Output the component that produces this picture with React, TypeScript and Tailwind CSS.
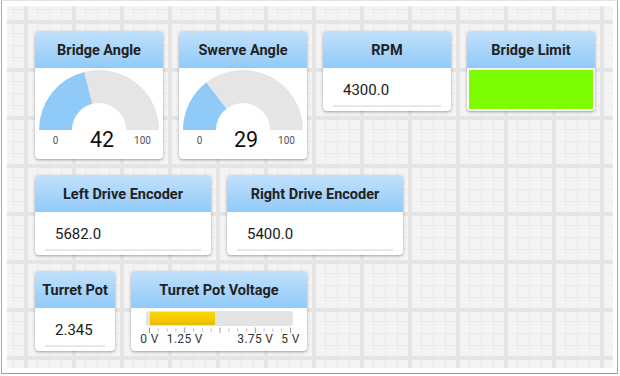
import React from "react";

const FONT = "font-['Roboto','Liberation_Sans',sans-serif]";

function Card({
  title,
  w,
  h,
  children,
}: {
  title: string;
  w: string;
  h: string;
  children: React.ReactNode;
}) {
  return (
    <div
      className={`${w} ${h} shrink-0 rounded-[4px] bg-white shadow-[0_1px_3px_rgba(0,0,0,0.35)] overflow-hidden flex flex-col`}
    >
      <div className="h-[37px] shrink-0 pt-[3px] bg-linear-to-b from-[#c2e1fc] to-[#90caf9] flex items-center justify-center font-bold text-[14.5px] text-[#222] whitespace-nowrap">
        {title}
      </div>
      <div className="flex-1 relative">{children}</div>
    </div>
  );
}

function Gauge({ value }: { value: number }) {
  const cx = 64,
    cy = 62,
    R = 60,
    r = 27;
  const a = Math.PI * (1 - value / 100);
  const ox = cx + R * Math.cos(a),
    oy = cy - R * Math.sin(a);
  const ix = cx + r * Math.cos(a),
    iy = cy - r * Math.sin(a);
  const blue = `M ${cx - R} ${cy} A ${R} ${R} 0 0 1 ${ox} ${oy} L ${ix} ${iy} A ${r} ${r} 0 0 0 ${cx - r} ${cy} Z`;
  const gray = `M ${ox} ${oy} A ${R} ${R} 0 0 1 ${cx + R} ${cy} L ${cx + r} ${cy} A ${r} ${r} 0 0 0 ${ix} ${iy} Z`;
  return (
    <svg width="128" height="91" viewBox="0 0 128 91" className="block">
      <path d={gray} fill="#e5e5e5" />
      <path d={blue} fill="#90caf9" />
      <text x="20.5" y="75.5" fontSize="10" fill="#555" textAnchor="middle" fontFamily="Roboto, sans-serif">
        0
      </text>
      <text x="107.5" y="75.5" fontSize="10" fill="#555" textAnchor="middle" fontFamily="Roboto, sans-serif">
        100
      </text>
      <text x="67" y="78.7" fontSize="21.5" fill="#111" textAnchor="middle" fontFamily="Roboto, sans-serif">
        {value}
      </text>
    </svg>
  );
}

function Field({ value }: { value: string }) {
  return (
    <div className="px-[10px] pt-[7px]">
      <div className="h-[32px] border-b-2 border-[#e8e8e8] pl-[10px] flex items-center text-[15px] text-[#1a1a1a]">
        {value}
      </div>
    </div>
  );
}

function VoltageBar({ value, max }: { value: number; max: number }) {
  const inner = 140;
  const fill = (value / max) * inner;
  const ticks = Array.from({ length: 17 }, (_, i) => i);
  const step = 141 / 16;
  const labels: { i: number; t: string }[] = [
    { i: 0, t: "0 V" },
    { i: 4, t: "1.25 V" },
    { i: 12, t: "3.75 V" },
    { i: 16, t: "5 V" },
  ];
  return (
    <div className="pt-[3px] pl-[15px]">
      <div className="w-[147px] h-[15px] rounded-[3px] bg-[#e3e3e3] pl-[3.5px] py-[1px]">
        <div
          className="h-full rounded-[1px] bg-linear-to-b from-[#fbd800] to-[#e9bd00]"
          style={{ width: `${fill}px` }}
        />
      </div>
      <div className="relative w-[160px] h-[22px]">
        <svg width="160" height="8" className="block">
          {ticks.map((i) => {
            const major = i % 4 === 0;
            const x = 3.5 + i * step;
            return (
              <line
                key={i}
                x1={x}
                x2={x}
                y1={major ? 1.5 : 2.5}
                y2={major ? 7 : 5.5}
                stroke={major ? "#999" : "#bbb"}
                strokeWidth="1"
              />
            );
          })}
        </svg>
        {labels.map((l) => (
          <span
            key={l.i}
            className="absolute top-[6px] -translate-x-1/2 text-[12px] leading-[14px] tracking-[0.3px] text-[#333] whitespace-nowrap"
            style={{ left: `${3.5 + l.i * step}px` }}
          >
            {l.t}
          </span>
        ))}
      </div>
    </div>
  );
}

export default function App() {
  return (
    <div className={`w-[620px] h-[376px] bg-white ${FONT}`}>
      <div className="ml-[1px] w-[617px] h-[374px] border-x border-b border-t border-x-[#a8a8a8] border-b-[#9a9a9a] border-t-[#e4e4e4] px-[5px] pt-[5px] pb-[5px]">
        <div className="w-[606px] h-[362px] bg-[#f4f4f4] bg-[image:linear-gradient(to_right,#e5e5e5_4px,transparent_4px),linear-gradient(to_bottom,#e5e5e5_4px,transparent_4px),linear-gradient(to_right,#eaeaea_1px,transparent_1px),linear-gradient(to_bottom,#eaeaea_1px,transparent_1px)] bg-[size:48px_48px,48px_48px,12px_12px,12px_12px] bg-[position:17px_0,0_14px,6px_0,0_3px] pl-[28px] pt-[25px] flex flex-col gap-4">
          <div className="flex gap-4 items-start">
            <Card title="Bridge Angle" w="w-[128px]" h="h-[128px]">
              <Gauge value={42} />
            </Card>
            <Card title="Swerve Angle" w="w-[128px]" h="h-[128px]">
              <Gauge value={29} />
            </Card>
            <Card title="RPM" w="w-[128px]" h="h-[80px]">
              <Field value="4300.0" />
            </Card>
            <Card title="Bridge Limit" w="w-[128px]" h="h-[80px]">
              <div className="h-full p-[2px]">
                <div className="h-full bg-[#7cfc00]" />
              </div>
            </Card>
          </div>
          <div className="flex gap-4 items-start">
            <Card title="Left Drive Encoder" w="w-[176px]" h="h-[80px]">
              <Field value="5682.0" />
            </Card>
            <Card title="Right Drive Encoder" w="w-[176px]" h="h-[80px]">
              <Field value="5400.0" />
            </Card>
          </div>
          <div className="flex gap-4 items-start">
            <Card title="Turret Pot" w="w-[80px]" h="h-[80px]">
              <Field value="2.345" />
            </Card>
            <Card title="Turret Pot Voltage" w="w-[176px]" h="h-[80px]">
              <VoltageBar value={2.345} max={5} />
            </Card>
          </div>
        </div>
      </div>
    </div>
  );
}
